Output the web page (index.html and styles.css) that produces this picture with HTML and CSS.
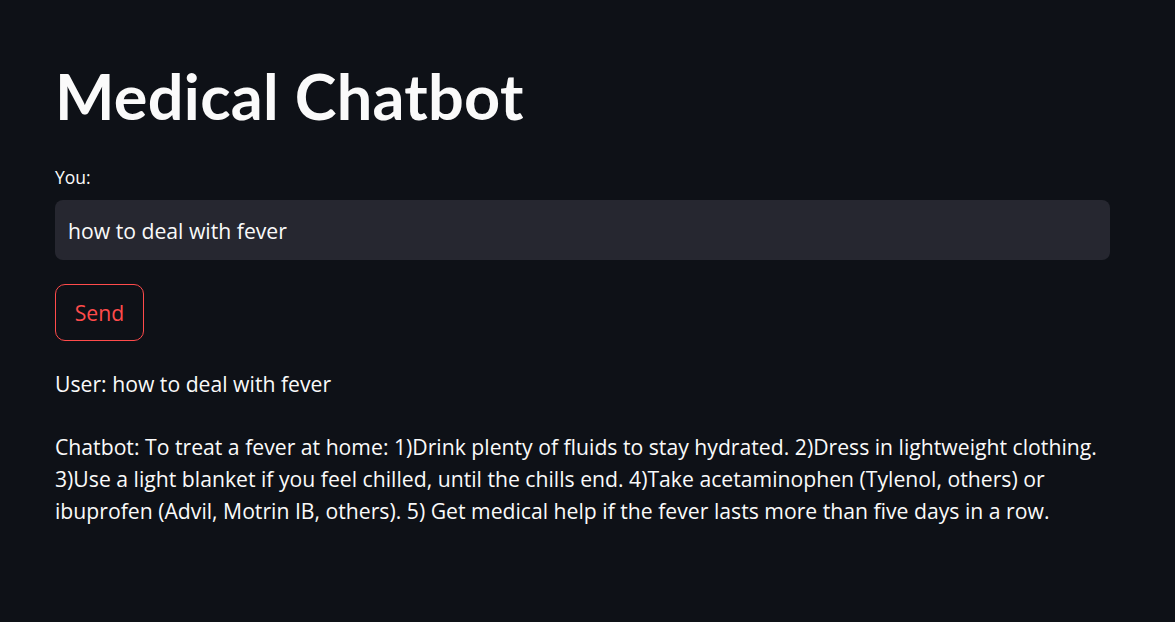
FILE: index.html
```html
<!DOCTYPE html>
<html lang="en">
<head>
<meta charset="utf-8">
<title>Medical Chatbot</title>
<link rel="stylesheet" href="styles.css">
</head>
<body>
<main class="app">
  <h1 class="title">Medical Chatbot</h1>
  <div class="field">
    <label class="label" for="q">You:</label>
    <div class="input-box"><input id="q" class="input" type="text" value="how to deal with fever"></div>
  </div>
  <div class="actions"><button class="btn" type="button">Send</button></div>
  <p class="msg user">User: how to deal with fever</p>
  <p class="msg bot">Chatbot: To treat a fever at home: 1)Drink plenty of fluids to stay hydrated. 2)Dress in lightweight clothing. 3)Use a light blanket if you feel chilled, until the chills end. 4)Take acetaminophen (Tylenol, others) or ibuprofen (Advil, Motrin IB, others). 5) Get medical help if the fever lasts more than five days in a row.</p>
</main>
</body>
</html>
```
FILE: styles.css
```css
html, body {
  margin: 0;
  padding: 0;
  background: #0e1117;
  color: #fafafa;
  font-family: "Open Sans", "Noto Sans", sans-serif;
}
.app {
  width: 1055px;
  padding: 56px 0 0 55px;
  display: flex;
  flex-direction: column;
}
.title {
  margin: 0;
  font-family: Lato, "Open Sans", sans-serif;
  font-size: 63px;
  font-weight: 700;
  line-height: 80px;
  letter-spacing: 0.3px;
}
.field {
  margin-top: 30px;
  display: flex;
  flex-direction: column;
}
.label {
  font-size: 17.5px;
  line-height: 22px;
  margin-bottom: 12px;
}
.input-box {
  height: 60px;
  background: #262730;
  border-radius: 8px;
  display: flex;
  align-items: center;
}
.input {
  flex: 1;
  background: transparent;
  border: none;
  outline: none;
  color: #fafafa;
  font-family: inherit;
  font-size: 21.2px;
  padding: 0 13px;
}
.actions {
  margin-top: 24px;
  display: flex;
}
.btn {
  width: 89px;
  height: 57px;
  background: transparent;
  border: 1px solid #ff4b4b;
  border-radius: 10px;
  color: #ff4b4b;
  font-family: inherit;
  font-size: 21.2px;
  padding: 0;
}
.msg {
  margin: 0;
  font-size: 21.2px;
  line-height: 32px;
}
.user {
  margin-top: 27px;
}
.bot {
  margin-top: 31px;
}
```
